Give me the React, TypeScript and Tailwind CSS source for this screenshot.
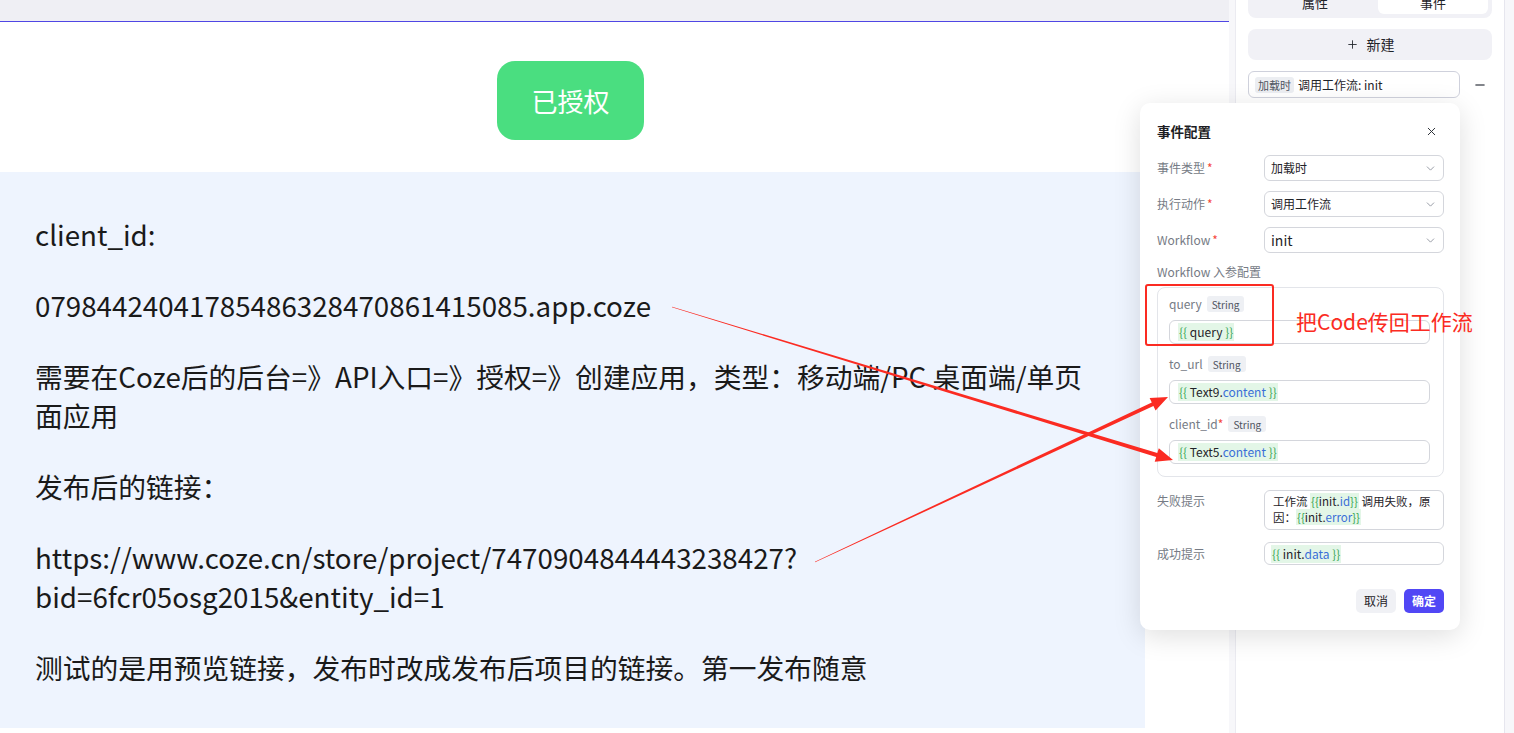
import React from 'react';
import { ChevronDown, X, Plus, Minus } from 'lucide-react';

const font = "font-['Noto_Sans_CJK_SC','Noto_Sans',sans-serif]";

// tapered arrow: thin at the start, wide at the head
function arrowPoints(sx: number, sy: number, tx: number, ty: number) {
  const dx = tx - sx;
  const dy = ty - sy;
  const len = Math.hypot(dx, dy);
  const ux = dx / len;
  const uy = dy / len;
  const nx = -uy;
  const ny = ux;
  const hl = 17;
  const bx = tx - ux * hl;
  const by = ty - uy * hl;
  const w0 = 0.35;
  const w1 = 2;
  const hw = 7;
  const pts = [
    [sx + nx * w0, sy + ny * w0],
    [bx + nx * w1, by + ny * w1],
    [bx + nx * hw, by + ny * hw],
    [tx, ty],
    [bx - nx * hw, by - ny * hw],
    [bx - nx * w1, by - ny * w1],
    [sx - nx * w0, sy - ny * w0],
  ];
  return pts.map((p) => `${p[0].toFixed(1)},${p[1].toFixed(1)}`).join(' ');
}

function Expr({ head, prop }: { head: string; prop?: string }) {
  return (
    <span className="bg-[#e3f6e7] px-[1px]">
      <span className="text-[#3aa655]">{'{{'}</span>
      <span className="text-[#1f2329]">{head}</span>
      {prop && <span className="text-[#3a6fd8]">{prop}</span>}
      <span className="text-[#3aa655]">{'}}'}</span>
    </span>
  );
}

function Star() {
  return <span className="ml-[2px] text-[#f5483b]">*</span>;
}

function SelectBox({ value, big }: { value: string; big?: boolean }) {
  return (
    <div className="flex h-[26px] w-[180px] items-center justify-between rounded-md border border-[#d4d6dc] bg-white pl-[6px] pr-[6px]">
      <span className={big ? 'text-[14px] text-[#1f2329]' : 'text-[12px] text-[#1f2329]'}>{value}</span>
      <ChevronDown className="h-[13px] w-[13px] text-[#8a8f99]" strokeWidth={1.6} />
    </div>
  );
}

function FormRow({ label, required, children }: { label: string; required?: boolean; children: React.ReactNode }) {
  return (
    <div className="flex items-center">
      <div className="w-[107px] text-[12px] text-[#767b85]">
        {label}
        {required && <Star />}
      </div>
      {children}
    </div>
  );
}

function Param({ name, required, children }: { name: string; required?: boolean; children: React.ReactNode }) {
  return (
    <div className="flex flex-col gap-[8px]">
      <div className="flex h-[16px] items-center gap-[5px]">
        <span className="text-[12px] text-[#767b85]">
          {name}
          {required && <span className="text-[#f5483b]">*</span>}
        </span>
        <span className="flex h-[16px] items-center rounded-[3px] bg-[#eef0f4] px-[5px] text-[10px] text-[#4e5360]">String</span>
      </div>
      <div className="flex h-[24px] w-[261px] items-center rounded-md border border-[#d4d6dc] px-[8px] text-[12px]">{children}</div>
    </div>
  );
}

function EventModal() {
  return (
    <div className="absolute left-[1140px] top-[103px] z-10 flex h-[527px] w-[320px] flex-col rounded-[10px] bg-white pl-[17px] pr-[16px] pt-[18px] shadow-[0_6px_28px_rgba(0,0,0,0.13)]">
      <div className="flex h-[20px] items-center justify-between">
        <span className="text-[13.5px] font-semibold text-[#1c1d23]">事件配置</span>
        <X className="mr-[6px] h-[13px] w-[13px] text-[#2b2f36]" strokeWidth={1.8} />
      </div>
      <div className="mt-[14px] flex flex-col gap-[10px]">
        <FormRow label="事件类型" required>
          <SelectBox value="加载时" />
        </FormRow>
        <FormRow label="执行动作" required>
          <SelectBox value="调用工作流" />
        </FormRow>
        <FormRow label="Workflow" required>
          <SelectBox value="init" big />
        </FormRow>
      </div>
      <div className="mt-[10px] text-[12px] leading-[18px] text-[#767b85]">Workflow 入参配置</div>
      <div className="mt-[6px] flex flex-col gap-[12px] rounded-lg border border-[#e3e5ea] px-[11px] pb-[12px] pt-[8px]">
        <Param name="query">
          <Expr head=" query " />
        </Param>
        <Param name="to_url">
          <Expr head=" Text9." prop="content " />
        </Param>
        <Param name="client_id" required>
          <Expr head=" Text5." prop="content " />
        </Param>
      </div>
      <div className="mt-[13px] flex items-start">
        <div className="w-[107px] pt-[2px] text-[12px] text-[#767b85]">失败提示</div>
        <div className="h-[40px] w-[180px] rounded-md border border-[#d4d6dc] px-[8px] pt-[2px] text-[11.5px] leading-[16px] text-[#1f2329]">
          工作流 <Expr head="init." prop="id" /> 调用失败，原
          <br />
          因：<Expr head="init." prop="error" />
        </div>
      </div>
      <div className="mt-[12px] flex items-center">
        <div className="w-[107px] text-[12px] text-[#767b85]">成功提示</div>
        <div className="flex h-[23px] w-[180px] items-center rounded-md border border-[#d4d6dc] px-[6px] text-[12px]">
          <Expr head=" init." prop="data " />
        </div>
      </div>
      <div className="mt-[24px] flex justify-end gap-[8px]">
        <button className="h-[24px] w-[40px] rounded-[5px] bg-[#f0f1f5] text-[12px] text-[#1f2329]">取消</button>
        <button className="h-[24px] w-[40px] rounded-[5px] bg-[#5147f5] text-[12px] font-bold text-white">确定</button>
      </div>
    </div>
  );
}

function Annotations() {
  return (
    <>
      <svg className="pointer-events-none absolute left-0 top-0 z-20 h-[733px] w-[1514px]" viewBox="0 0 1514 733">
        <rect x="1146" y="285" width="127" height="60" rx="2" fill="none" stroke="#fb2b22" strokeWidth="2" />
        <polygon points={arrowPoints(672, 307, 1173, 460)} fill="#fb2b22" />
        <polygon points={arrowPoints(815, 562, 1168, 397)} fill="#fb2b22" />
      </svg>
      <span className="pointer-events-none absolute left-[1296px] top-[306px] z-20 text-[21px] leading-[30px] text-[#fb2b22]">把Code传回工作流</span>
    </>
  );
}

export default function App() {
  return (
    <div className={`relative flex h-[733px] w-[1514px] overflow-hidden bg-white ${font}`}>
      <main className="flex w-[1229px] flex-col">
        <div className="h-[22px] shrink-0 border-b border-[#5046e4] bg-[#efeff4]" />
        <div className="w-[1145px]">
          <div className="flex h-[150px] items-start justify-center pr-[4px] pt-[39px]">
            <div className="flex h-[79px] w-[147px] items-center justify-center rounded-[18px] bg-[#4ade80] text-[26px] text-white">已授权</div>
          </div>
          <div className="h-[556px] bg-[#eef4fe] px-[35px] pt-[43px] text-[27.75px] leading-[39px] text-[#1a1a1a]">
            <p className="mb-[32px]">client_id:</p>
            <p className="mb-[32px]">07984424041785486328470861415085.app.coze</p>
            <p className="mb-[32px]">
              需要在Coze后的后台=》API入口=》授权=》创建应用，类型：移动端/PC 桌面端/单页
              <br />
              面应用
            </p>
            <p className="mb-[32px]">发布后的链接：</p>
            <p className="mb-[32px]">
              https://www.coze.cn/store/project/7470904844443238427?
              <br />
              bid=6fcr05osg2015&amp;entity_id=1
            </p>
            <p>测试的是用预览链接，发布时改成发布后项目的链接。第一发布随意</p>
          </div>
        </div>
      </main>
      <div className="w-[7px] shrink-0 border-r border-[#ebebf1] bg-[#f7f7fa]" />
      <aside className="flex w-[268px] shrink-0 flex-col px-[12px]">
        <div className="-mt-[18px] flex h-[36px] rounded-lg bg-[#f1f1f6] p-[4px]">
          <div className="flex flex-1 items-center justify-center pt-[6px] text-[13px] text-[#1f2329]">属性</div>
          <div className="flex w-[110px] items-center justify-center rounded-md bg-white pt-[6px] text-[13px] text-[#1f2329]">事件</div>
        </div>
        <button className="mt-[11px] flex h-[31px] items-center justify-center gap-[8px] rounded-lg bg-[#f1f1f6] text-[14px] text-[#1f2329]">
          <Plus className="h-[13px] w-[13px]" strokeWidth={1.6} />
          新建
        </button>
        <div className="mt-[11px] flex items-center">
          <div className="flex h-[27px] w-[212px] items-center gap-[4px] rounded-md border border-[#cfd1dc] px-[6px]">
            <span className="rounded-[3px] bg-[#eceef2] px-[3px] text-[11px] leading-[16px] text-[#4e5360]">加载时</span>
            <span className="text-[12px] text-[#1f2329]">调用工作流: init</span>
          </div>
          <Minus className="ml-[13px] h-[14px] w-[14px] text-[#5a5e66]" strokeWidth={2.4} />
        </div>
      </aside>
      <div className="flex-1 border-l border-[#e6e6ee] bg-[#f7f7fa]" />
      <EventModal />
      <Annotations />
    </div>
  );
}
